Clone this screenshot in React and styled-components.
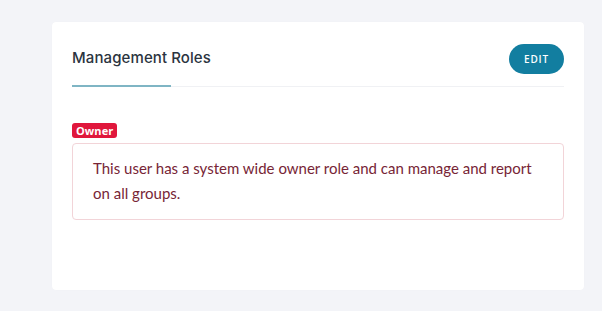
import React from "react";
import styled, { createGlobalStyle } from "styled-components";

const GlobalStyle = createGlobalStyle`
  body {
    margin: 0;
    background: #f3f4f8;
    font-family: "Open Sans", "Liberation Sans", sans-serif;
  }
`;

const Page = styled.div`
  padding: 22px 18px 21px 52px;
`;

const Card = styled.div`
  background: #fff;
  border-radius: 4px;
  height: 268px;
  box-sizing: border-box;
  padding: 22px 20px 0 20px;
  box-shadow: 0 0 1px rgba(0, 0, 0, 0.04);
`;

const Header = styled.div`
  display: flex;
  justify-content: space-between;
  align-items: flex-start;
  border-bottom: 1px solid #f0f1f4;
  position: relative;
  height: 42px;
`;

const Title = styled.h2`
  margin: 4px 0 0;
  font-family: "Inter", "Noto Sans", sans-serif;
  font-size: 15px;
  font-weight: 500;
  color: #2b3440;
  letter-spacing: 0.1px;
`;

const ActiveTab = styled.div`
  position: absolute;
  left: 0;
  bottom: -1px;
  width: 99px;
  height: 2px;
  background: #7fb5c4;
`;

const EditButton = styled.button`
  height: 30px;
  width: 55px;
  border: none;
  border-radius: 15px;
  background: #127ea0;
  color: #fff;
  font-family: "Open Sans", sans-serif;
  font-size: 10px;
  font-weight: 600;
  letter-spacing: 0.8px;
  cursor: pointer;
`;

const Body = styled.div`
  padding-top: 36px;
`;

const Badge = styled.div`
  width: fit-content;
  background: #e0173c;
  color: #fff;
  font-size: 11px;
  font-weight: 700;
  line-height: 15px;
  padding: 0 4px;
  border-radius: 3px;
  letter-spacing: 0.1px;
`;

const Notice = styled.div`
  margin-top: 5px;
  border: 1px solid #f2d4d8;
  border-radius: 4px;
  padding: 12px 20px 13px;
  color: #772536;
  font-family: "Lato", "Open Sans", sans-serif;
  font-size: 15px;
  line-height: 25px;
`;

export default function App() {
  return (
    <>
      <GlobalStyle />
      <Page>
        <Card>
          <Header>
            <Title>Management Roles</Title>
            <EditButton>EDIT</EditButton>
            <ActiveTab />
          </Header>
          <Body>
            <Badge>Owner</Badge>
            <Notice>
              This user has a system wide owner role and can manage and report
              on all groups.
            </Notice>
          </Body>
        </Card>
      </Page>
    </>
  );
}
